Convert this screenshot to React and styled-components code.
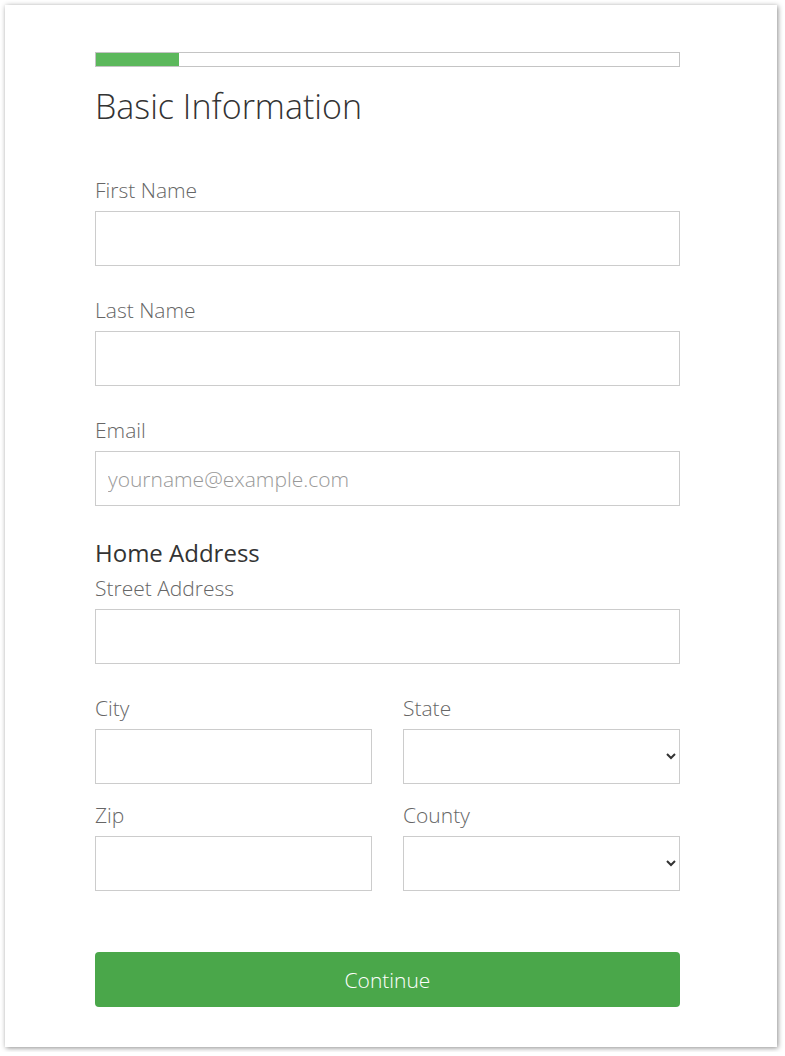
import React from 'react';
import styled, { createGlobalStyle } from 'styled-components';

const GlobalStyle = createGlobalStyle`
    body {
        margin: 0;
        background: #fff;
        font-family: "Open Sans", "Liberation Sans", sans-serif;
    }
`;

const Page = styled.div`
    padding: 5px;
`;

const Card = styled.div`
    box-sizing: border-box;
    width: 772px;
    padding: 47px 0 40px 90px;
    background: #fff;
    box-shadow: 1px 1px 5px rgba(0, 0, 0, 0.45);
`;

const Form = styled.form`
    width: 585px;
`;

const Progress = styled.div`
    box-sizing: border-box;
    height: 15px;
    border: 1px solid #c4c4c4;
    background: #fff;
`;

const ProgressFill = styled.div`
    height: 100%;
    width: ${props => props.value}%;
    background: #5cb85c;
`;

const Title = styled.h1`
    margin: 20px 0 50px;
    font-size: 34px;
    line-height: 38px;
    font-weight: 300;
    color: #333;
`;

// top margin collapses with the field above it (29px), so 33 here means 33 total
const SectionTitle = styled.h2`
    margin: 33px 0 6px;
    font-size: 24px;
    line-height: 28px;
    font-weight: 400;
    color: #333;
`;

const Field = styled.div`
    margin-bottom: ${props => (props.tight ? 0 : 29)}px;
`;

const Label = styled.label`
    display: block;
    margin-bottom: 6px;
    font-size: 21px;
    line-height: 30px;
    font-weight: 300;
    color: #666;
`;

const Input = styled.input`
    display: block;
    box-sizing: border-box;
    width: 100%;
    height: 55px;
    margin: 0;
    padding: 0 12px;
    border: 1px solid #ccc;
    border-radius: 0;
    background: #fff;
    font-family: inherit;
    font-size: 21px;
    font-weight: 300;
    color: #333;
    outline: none;

    &::placeholder {
        color: #999;
    }
`;

const Select = styled.select`
    display: block;
    box-sizing: border-box;
    width: 100%;
    height: 55px;
    margin: 0;
    padding: 0 8px;
    border: 1px solid #ccc;
    border-radius: 0;
    background: #fff;
    font-family: inherit;
    font-size: 21px;
    font-weight: 300;
    color: #333;
    outline: none;
`;

const Grid = styled.div`
    display: grid;
    grid-template-columns: 1fr 1fr;
    column-gap: 31px;
    row-gap: 16px;
    margin-bottom: 61px;
`;

const Button = styled.button`
    display: block;
    width: 100%;
    height: 55px;
    border: none;
    border-radius: 4px;
    background: #4aa74a;
    color: #fff;
    font-family: inherit;
    font-size: 21px;
    font-weight: 300;
    cursor: pointer;
`;

const TextField = ({ label, id, placeholder, tight }) => (
    <Field tight={tight}>
        <Label htmlFor={id}>{label}</Label>
        <Input id={id} type="text" placeholder={placeholder} />
    </Field>
);

const SelectField = ({ label, id }) => (
    <Field tight>
        <Label htmlFor={id}>{label}</Label>
        <Select id={id} defaultValue="">
            <option value=""></option>
        </Select>
    </Field>
);

const App = () => (
    <Page>
        <GlobalStyle />
        <Card>
            <Form onSubmit={e => e.preventDefault()}>
                <Progress>
                    <ProgressFill value={14.2} />
                </Progress>
                <Title>Basic Information</Title>
                <TextField label="First Name" id="first-name" />
                <TextField label="Last Name" id="last-name" />
                <TextField label="Email" id="email" placeholder="yourname@example.com" />
                <SectionTitle>Home Address</SectionTitle>
                <TextField label="Street Address" id="street" />
                <Grid>
                    <TextField label="City" id="city" tight />
                    <SelectField label="State" id="state" />
                    <TextField label="Zip" id="zip" tight />
                    <SelectField label="County" id="county" />
                </Grid>
                <Button type="submit">Continue</Button>
            </Form>
        </Card>
    </Page>
);

export default App;
